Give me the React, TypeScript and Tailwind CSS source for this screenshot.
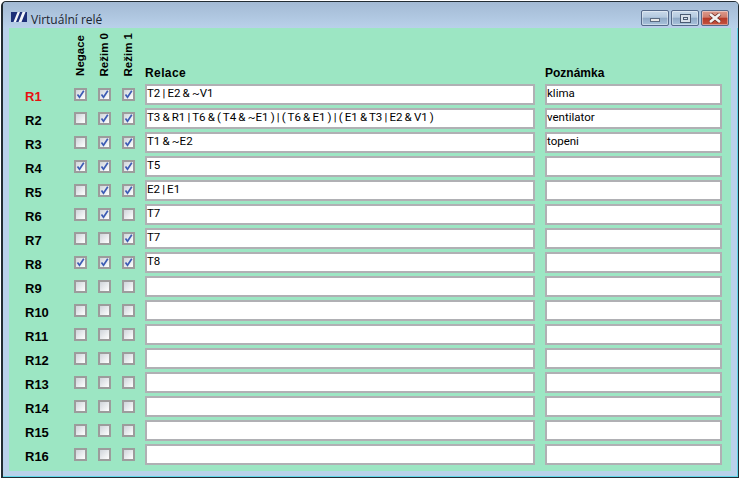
const rows = [
  { name: "R1", flags: [true, true, true], relace: "T2 | E2 & ~V1", note: "klima" },
  { name: "R2", flags: [false, true, true], relace: "T3 & R1 | T6 & ( T4 & ~E1 ) | ( T6 & E1 ) | ( E1 & T3 | E2 & V1 )", note: "ventilator" },
  { name: "R3", flags: [false, true, true], relace: "T1 & ~E2", note: "topeni" },
  { name: "R4", flags: [true, true, true], relace: "T5", note: "" },
  { name: "R5", flags: [false, true, true], relace: "E2 | E1", note: "" },
  { name: "R6", flags: [false, true, false], relace: "T7", note: "" },
  { name: "R7", flags: [false, false, true], relace: "T7", note: "" },
  { name: "R8", flags: [true, true, true], relace: "T8", note: "" },
  ...Array.from({ length: 8 }, (_, i) => ({
    name: `R${i + 9}`,
    flags: [false, false, false],
    relace: "",
    note: "",
  })),
];

function Check({ on }: { on: boolean }) {
  return (
    <div className="w-[13px] h-[13px] border-2 border-[#9c9c9c] bg-gradient-to-br from-[#cfd4da] to-white">
      {on && (
        <svg viewBox="0 0 9 9" className="w-[9px] h-[9px]">
          <path d="M1.5 4.5 L3.5 7.2 L7.8 0.8" fill="none" stroke="#3c5cb4" strokeWidth="1.7" />
        </svg>
      )}
    </div>
  );
}

function Field({ value, className }: { value: string; className: string }) {
  return (
    <div
      className={`h-[21px] bg-white border-2 border-[#b0b0b4] pt-[1px] text-[11.5px] leading-[13px] text-black [word-spacing:-0.7px] whitespace-nowrap font-['Roboto',sans-serif] ${className}`}
    >
      {value}
    </div>
  );
}

function VerticalLabel({ text }: { text: string }) {
  return (
    <div className="w-[13px] flex justify-center">
      <span className="[writing-mode:vertical-rl] rotate-180 whitespace-nowrap">{text}</span>
    </div>
  );
}

function WinButton({ className, children }: { className: string; children: React.ReactNode }) {
  return (
    <div
      className={`w-[28px] h-[16px] rounded-[2px] border border-[#55698a] flex items-center justify-center shadow-[inset_0_0_0_1px_#ffffff66] ${className}`}
    >
      {children}
    </div>
  );
}

const glass = "bg-[linear-gradient(#c9d9ea_0%,#b4c9df_45%,#8fa9c6_50%,#a9c3dc_100%)]";

export default function App() {
  return (
    <div className="w-[740px] h-[480px] bg-white pl-[1px] pt-[1px] font-['Liberation_Sans',sans-serif]">
      <div className="w-[738px] h-[477px] rounded-t-[5px] border-l-2 border-t border-r border-b border-[#222c33] bg-[#b9d1ea] pl-[6px] pr-[7px] shadow-[inset_-1px_-1px_0_#62d6ea] flex flex-col">
        <div className="h-[26px] shrink-0 flex items-start bg-gradient-to-b from-[#a3bad4] to-[#b9d1ea] -ml-[6px] -mr-[7px] pl-[8px] pr-[9px] pt-[8px] rounded-t-[4px]">
          <svg viewBox="0 0 16 10" className="w-[16px] h-[10px] mt-[2px]">
            <rect width="16" height="10" fill="#1c2f78" />
            <path d="M2.5 10 L6.5 0 H9 L5 10 Z M7.5 10 L11.5 0 H14.5 L10.5 10 Z" fill="#f4f6fb" />
          </svg>
          <span className="ml-[4px] text-[12px] leading-[19px] text-[#1a2430] font-['Open_Sans',sans-serif]">
            Virtuální relé
          </span>
          <div className="ml-auto flex gap-[2px]">
            <WinButton className={glass}>
              <div className="mt-[3px] w-[10px] h-[4px] bg-[#e8e8e8] border border-[#5a6a80]" />
            </WinButton>
            <WinButton className={glass}>
              <div className="w-[11px] h-[9px] bg-[#d8e0ea] border border-[#4a5a72] flex items-center justify-center">
                <div className="w-[5px] h-[3px] border border-[#4a5a72]" />
              </div>
            </WinButton>
            <WinButton className="border-[#6b2a22] bg-[linear-gradient(#dc9a8c_0%,#cf7c6c_45%,#b53a28_50%,#c4533f_100%)]">
              <svg viewBox="0 0 14 10" className="w-[14px] h-[10px]">
                <path d="M2 1 L12 9 M12 1 L2 9" stroke="#6b2a22" strokeWidth="4" />
                <path d="M2 1 L12 9 M12 1 L2 9" stroke="#f2f2f2" strokeWidth="2.6" />
              </svg>
            </WinButton>
          </div>
        </div>
        <div className="h-[443px] bg-[#9ce6c3] pl-[16px] pr-[9px]">
          <div className="h-[56px] flex items-end text-[12px] font-bold text-black">
            <div className="w-[49px]" />
            <div className="flex gap-[11px] h-[56px] items-end pb-[8px] text-[11.5px]">
              <VerticalLabel text="Negace" />
              <VerticalLabel text="Režim 0" />
              <VerticalLabel text="Režim 1" />
            </div>
            <div className="w-[400px] ml-[10px] pb-[2px] tracking-[0.4px]">Relace</div>
            <div className="pb-[2px]">Poznámka</div>
          </div>
          <div className="flex flex-col gap-[3px]">
            {rows.map((row, i) => (
              <div key={row.name} className="flex items-center h-[21px]">
                <div
                  className={`w-[49px] text-[13px] font-bold pt-[5px] ${i === 0 ? "text-[#e81010]" : "text-black"}`}
                >
                  {row.name}
                </div>
                <div className="flex gap-[11px]">
                  {row.flags.map((on, j) => (
                    <Check key={j} on={on} />
                  ))}
                </div>
                <Field value={row.relace} className="w-[390px] ml-[10px]" />
                <Field value={row.note} className="w-[177px] ml-[10px]" />
              </div>
            ))}
          </div>
        </div>
      </div>
    </div>
  );
}
